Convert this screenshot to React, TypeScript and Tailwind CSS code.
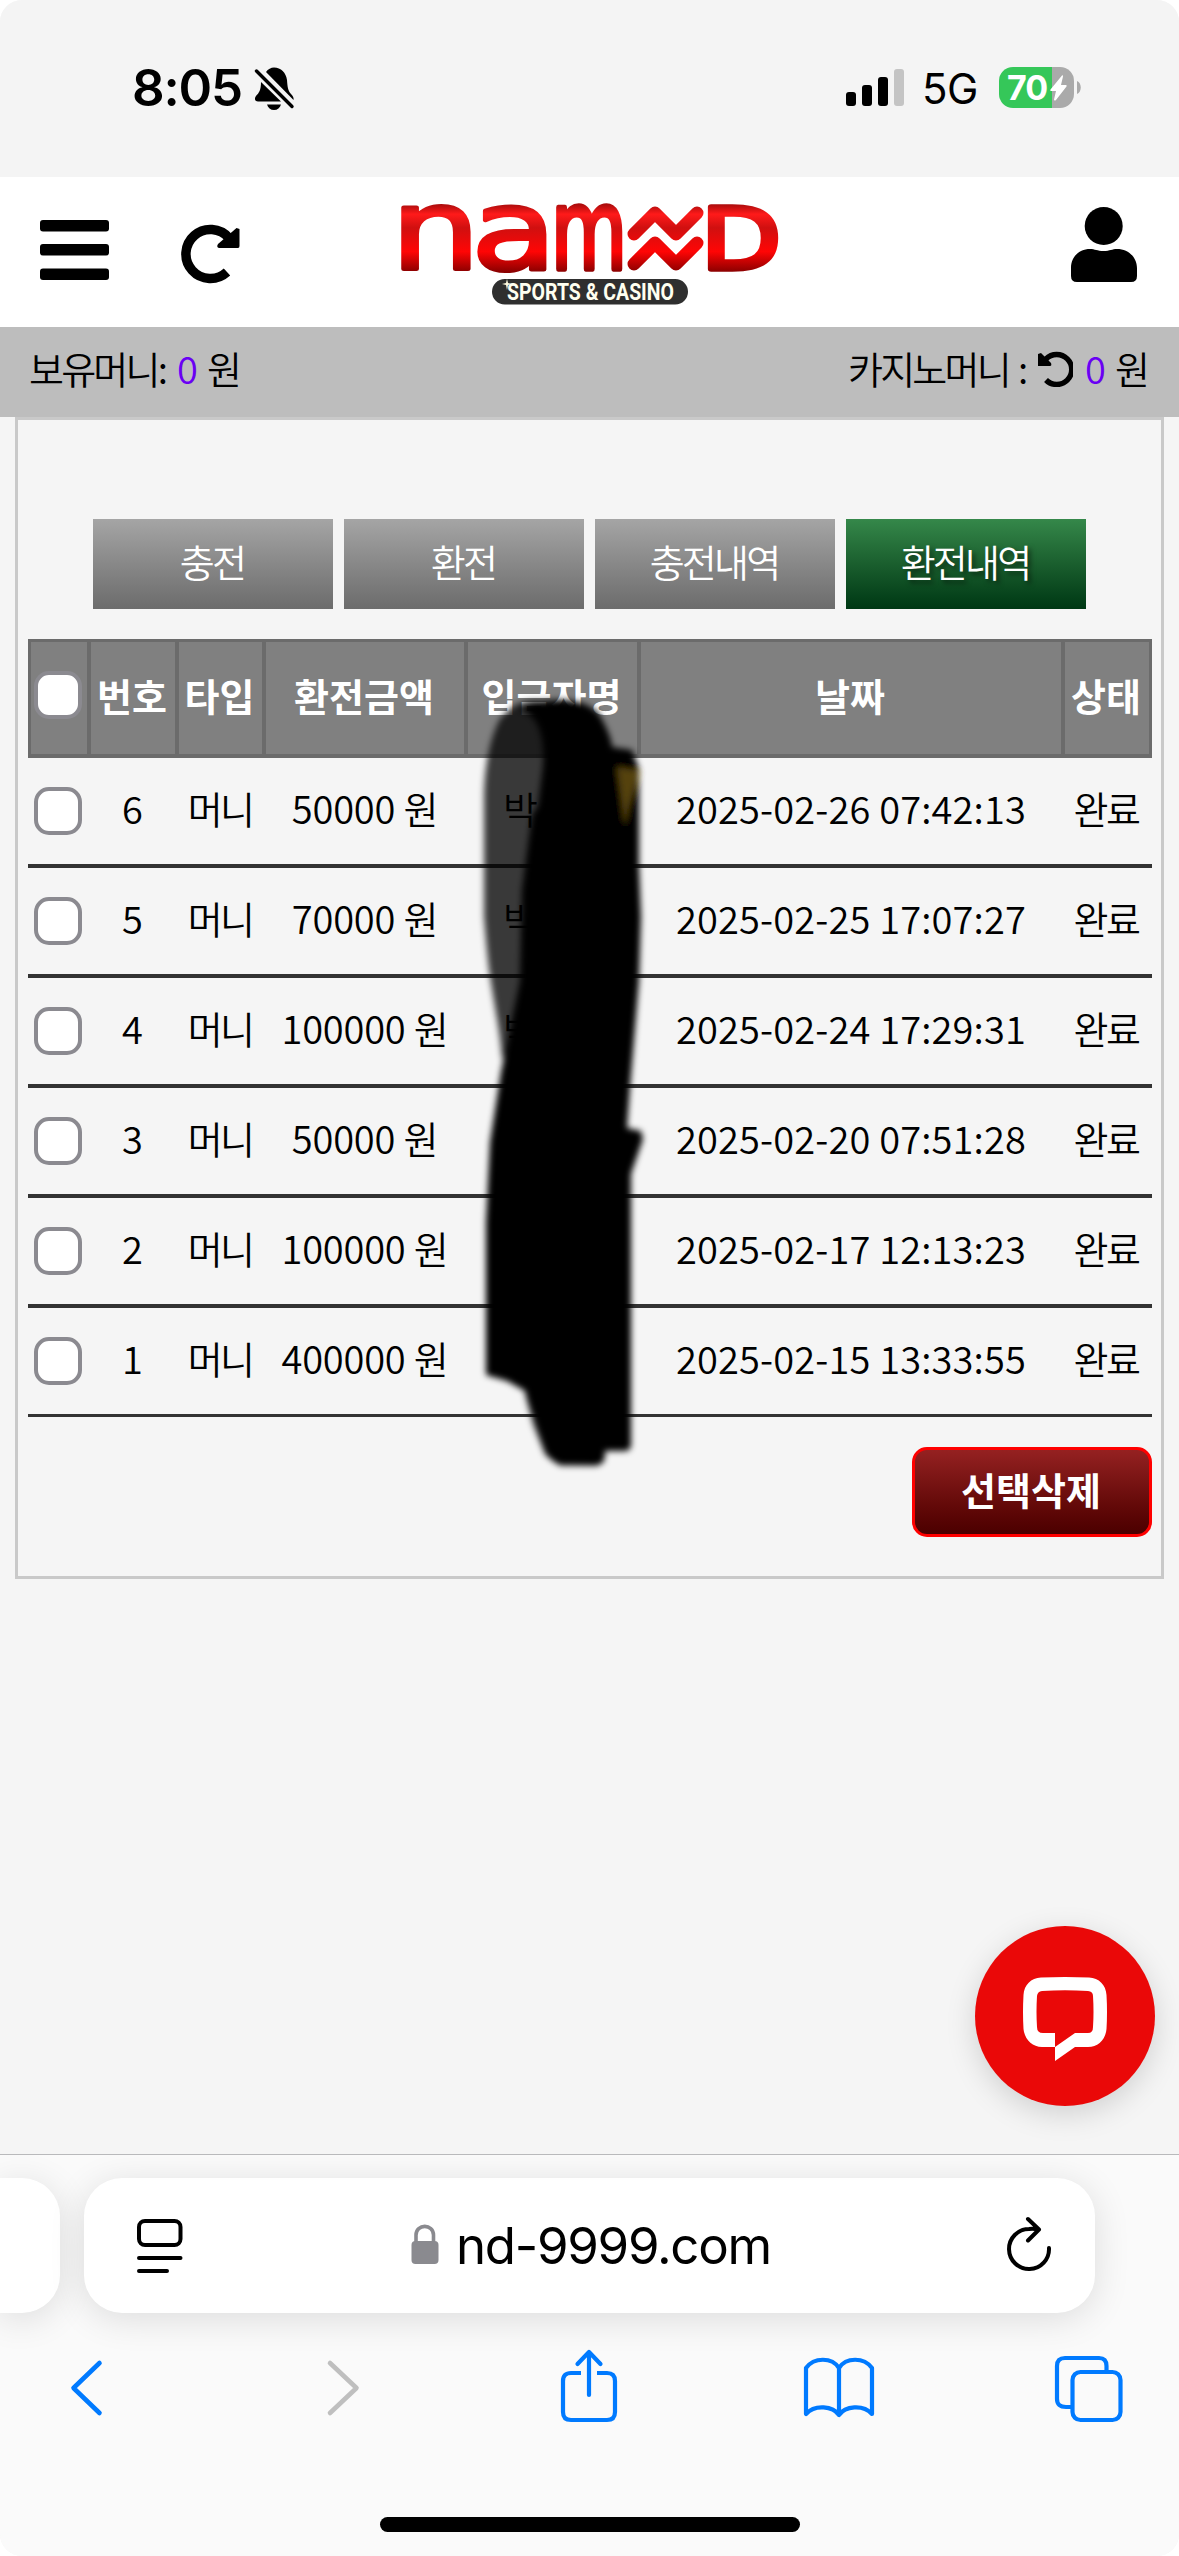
import React from 'react';
import clsx from 'clsx';

const TABS = [
    { label: '충전', active: false },
    { label: '환전', active: false },
    { label: '충전내역', active: false },
    { label: '환전내역', active: true },
];

const HEADINGS = ['번호', '타입', '환전금액', '입금자명', '날짜', '상태'];

const ROWS = [
    { no: 6, amount: '50000 원', name: '박', date: '2025-02-26 07:42:13' },
    { no: 5, amount: '70000 원', name: '박', date: '2025-02-25 17:07:27' },
    { no: 4, amount: '100000 원', name: '박', date: '2025-02-24 17:29:31' },
    { no: 3, amount: '50000 원', name: '', date: '2025-02-20 07:51:28' },
    { no: 2, amount: '100000 원', name: '', date: '2025-02-17 12:13:23' },
    { no: 1, amount: '400000 원', name: '', date: '2025-02-15 13:33:55' },
];

const StatusBar = () => (
    <div className="flex h-[177px] items-start justify-between bg-[#f4f4f4] pl-[132px] pr-[98px] font-['Inter',sans-serif]">
        <div className="flex items-start pt-[57px]">
            <span className="w-[122px] whitespace-nowrap text-[51px] font-semibold leading-[62px] tracking-[-1.2px]">8:05</span>
            <svg width="42" height="44" viewBox="0 0 42 44" className="mt-[10px]">
                <path d="M12 5C14 2 17 0.500 20 0.500C27 0.500 32 5.500 33 13C33.500 20 34 24 37 27C39 29 40 31 39.500 33Z" />
                <path d="M7 15L27 34.500H4C1 34.500 0 31.500 2 29C5 26 7 23 7 15Z" />
                <path d="M13 37.500H27C26 41 23.500 43 20 43C16.500 43 14 41 13 37.500Z" />
                <path d="M2.500 4L38 39.500" stroke="#000" strokeWidth="3.400" strokeLinecap="round" />
            </svg>
        </div>
        <div className="flex items-start">
            <svg width="58" height="38" viewBox="0 0 58 38" className="mt-[69px]">
                <rect x="0" y="23" width="10" height="14" rx="3" />
                <rect x="16" y="16" width="10" height="21" rx="3" />
                <rect x="32" y="8" width="10" height="29" rx="3" />
                <rect x="48" y="0" width="10" height="37" rx="3" fill="#c4c4c4" />
            </svg>
            <span className="ml-[18px] mt-[64px] w-[77px] whitespace-nowrap text-[42px] leading-[50px] tracking-[-0.5px]">5G</span>
            <div className="mt-[67px] flex h-[41px] w-[75px] items-center rounded-[14px] bg-[linear-gradient(to_right,#35c759_53px,#aaaaaa_53px)] pl-[8px]">
                <span className="w-[43px] text-[34px] font-bold leading-[41px] tracking-[-1px] text-white">70</span>
                <svg width="17" height="26" viewBox="0 0 17 26">
                    <path d="M12 0.500L0.500 14.500C0 15.500 0.500 16 1.500 16H6L4 24.500C4 25.500 5 26 6 25L16.500 11.500C17 10.500 16.500 10 15.500 10H11L13 1.500C13 0.500 12.500 0 12 0.500Z" fill="#fff" />
                </svg>
            </div>
            <svg width="4" height="13" viewBox="0 0 4 13" className="ml-[3px] mt-[81px]">
                <path d="M0 0C5 2 5 11 0 13Z" fill="#aaa" />
            </svg>
        </div>
    </div>
);

const Logo = () => (
    <svg width="380" height="106" viewBox="0 0 380 106" className="overflow-visible font-['DejaVu_Sans',sans-serif]">
        <defs>
            <linearGradient id="red" x1="0" y1="3" x2="0" y2="71" gradientUnits="userSpaceOnUse">
                <stop offset="0" stopColor="#a80c0c" />
                <stop offset="0.150" stopColor="#ff1a1a" />
                <stop offset="0.350" stopColor="#d01010" />
                <stop offset="0.700" stopColor="#ff0505" />
                <stop offset="1" stopColor="#8a0000" />
            </linearGradient>
        </defs>
        <g fill="url(#red)" stroke="url(#red)" strokeWidth="4" strokeLinejoin="round">
            <text x="-7.900" y="67.500" fontSize="112" textLength="89" lengthAdjust="spacingAndGlyphs">n</text>
            <text x="72.500" y="67.500" fontSize="112" textLength="85" lengthAdjust="spacingAndGlyphs">a</text>
            <text x="152" y="67.500" fontSize="112" strokeWidth="5.500" textLength="76" lengthAdjust="spacingAndGlyphs">m</text>
            <text x="302" y="67.500" fontSize="86" strokeWidth="5.500" textLength="80" lengthAdjust="spacingAndGlyphs">D</text>
        </g>
        <g fill="none" stroke="url(#red)" strokeWidth="13" strokeLinecap="round" strokeLinejoin="round">
            <path d="M235 33L256 12L277 33L298 12" />
            <path d="M235 63L256 42L277 63L298 42" />
        </g>
        <rect x="93" y="78" width="196" height="25.500" rx="12.750" fill="#2f2f2f" />
        <text x="108" y="98.500" fontSize="23" fontWeight="700" fill="#fffff0" textLength="167" lengthAdjust="spacingAndGlyphs" className="font-['Roboto',sans-serif]">SPORTS &amp; CASINO</text>
        <path d="M108 78L109 82L113 83L109 84L108 89L107 84L103 83L107 82Z" fill="#fffbe0" />
    </svg>
);

const SiteHeader = () => (
    <header className="flex h-[150px] items-start bg-white">
        <svg width="69" height="60" viewBox="0 0 69 60" className="ml-[40px] mt-[43px]">
            <rect width="69" height="11.500" rx="3" />
            <rect y="24" width="69" height="11.500" rx="3" />
            <rect y="48.500" width="69" height="11.500" rx="3" />
        </svg>
        <svg width="60" height="60" viewBox="0 0 60 60" className="ml-[72px] mt-[47px]">
            <path d="M46 48A24.500 24.500 0 1 1 48 14" fill="none" stroke="#000" strokeWidth="9.500" />
            <path d="M55.500 4L58.500 5V22Q58.500 24 57 24H38Q35 23 37 20Z" strokeLinejoin="round" />
        </svg>
        <div className="ml-[158px] mt-[24px]">
            <Logo />
        </div>
        <svg width="66" height="76" viewBox="0 0 66 76" className="ml-[292px] mt-[30px]">
            <circle cx="32.700" cy="19" r="19" />
            <path d="M0 61C0 49 9 42 19 42C24 42 26 44 32.700 44C39 44 41 42 46 42C57 42 66 50 66 61V69Q66 75 60 75H6Q0 75 0 69Z" />
        </svg>
    </header>
);

const BalanceBar = () => (
    <div className="flex h-[90px] items-center justify-between bg-[#bdbdbd] pl-[29px] pr-[29px] text-[38px] font-[350] leading-[54px]">
        <div className="flex pb-[8px]">
            <span className="w-[148px] tracking-[-2.8px]">보유머니:</span>
            <span className="w-[30px] text-[#6a00f4]">0</span>
            <span>원</span>
        </div>
        <div className="flex pb-[8px]">
            <span className="w-[170px] tracking-[-2.8px]">카지노머니</span>
            <span className="w-[20px]">:</span>
            <svg width="35" height="36" viewBox="0 0 35 36" className="mr-[12px] mt-[10px]">
                <path d="M8 8A15 15 0 1 1 8 29" fill="none" stroke="#000" strokeWidth="5.400" />
                <path d="M0 3L3 2L13 12Q14 15 12 15H0Z" />
            </svg>
            <span className="w-[30px] text-[#6a00f4]">0</span>
            <span>원</span>
        </div>
    </div>
);

const Checkbox = () => (
    <span className="block h-12 w-12 rounded-[15px] border-4 border-[#8b8a90] bg-white" />
);

// Marker strokes that hide the depositor names
const Scribble = () => (
    <svg width="220" height="820" viewBox="460 680 220 820" className="absolute left-[442px] top-[260px]">
        <defs>
            <filter id="soft">
                <feGaussianBlur stdDeviation="3" />
            </filter>
        </defs>
        <g filter="url(#soft)">
            <path d="M545 702C525 697 510 706 500 719C491 735 484 765 484 799V917C486 940 488 965 490 976C495 1010 500 1030 502 1060L530 1000L550 800Z" fillOpacity="0.770" />
            <path d="M520 710C535 698 580 694 598 713C606 725 612 740 612 747L632 750L639 769L639 864L641 917L639 981L630 1088L627 1128L641 1131L643 1139L631 1174V1442Q632 1451 625 1451H605Q606 1465 597 1465L560 1464Q550 1462 545 1450L525 1391L507 1381L486 1375L486 1222L490 1142L501 1072L520 981L522 890L532 815L538 806L543 767C545 740 540 715 520 710Z" />
            <path d="M524 1391L533 1425L545 1455L560 1466H598L600 1440H550Z" fillOpacity="0.700" />
            <path d="M617 767L640 771L629 806L625 826Z" fill="#54420f" />
        </g>
    </svg>
);

const HistoryPanel = () => (
    <section className="relative mx-[15px] h-[1162px] border-[3px] border-[#c9c9c9] px-[10px] pt-[99px]">
        <nav className="ml-[65px] flex gap-[11px]">
            {TABS.map((tab) => (
                <button
                    key={tab.label}
                    className={clsx(
                        'h-[90px] w-[240px] pb-[8px] pr-[2px] text-[38px] font-[350] tracking-[-2.8px] text-white',
                        tab.active
                            ? 'bg-linear-to-b from-[#35884a] to-[#003814] [text-shadow:3px_3px_5px_#0008]'
                            : 'bg-linear-to-b from-[#a5a5a5] to-[#6c6c6c]'
                    )}
                >
                    {tab.label}
                </button>
            ))}
        </nav>

        <div className="mt-[30px] w-[1124px]">
            <div className="grid h-[119px] grid-cols-[60px_88px_87px_202px_173px_424px_88px] border-x border-t-[3px] border-b-4 border-[#6b6b6b] bg-[#808080] text-[38px] font-bold text-white">
                <div className="flex items-center justify-center border-x-2 border-[#6b6b6b] pb-[6px] pr-[2px]">
                    <Checkbox />
                </div>
                {HEADINGS.map((heading) => (
                    <div key={heading} className="flex items-center justify-center whitespace-nowrap border-x-2 border-[#6b6b6b] pb-[7px] pr-[2px]">
                        {heading}
                    </div>
                ))}
            </div>
            {ROWS.map((row) => (
                <div
                    key={row.no}
                    className="grid h-[110px] grid-cols-[61px_88px_87px_202px_173px_424px_89px] items-center border-b-4 border-[#333] text-center text-[38px] font-[350] last:h-[109px] last:border-b-[3px]"
                >
                    <div className="flex justify-center pr-[2px]">
                        <Checkbox />
                    </div>
                    <span className="pb-[7px] pr-[1px]">{row.no}</span>
                    <span className="pb-[7px] pr-[1px] tracking-[-2.8px]">머니</span>
                    <span className="whitespace-nowrap pb-[7px] tracking-[-0.2px]">{row.amount}</span>
                    <span className="pb-[7px] pl-[37px] text-left">{row.name}</span>
                    <span className="whitespace-nowrap pb-[7px] tracking-[0.15px]">{row.date}</span>
                    <span className="pb-[7px] pr-[3px] tracking-[-2.4px]">완료</span>
                </div>
            ))}
        </div>

        <button className="ml-auto mr-[-1px] mt-[30px] block h-[90px] w-[240px] rounded-[15px] border-[3px] border-[#ff0000] bg-linear-to-b from-[#952121] to-[#4b0000] pb-[7px] pr-[2px] text-[38px] font-bold text-white">
            선택삭제
        </button>
        <Scribble />
    </section>
);

const ChatButton = () => (
    <button className="ml-auto mr-[24px] mt-[347px] flex h-[180px] w-[180px] justify-center rounded-full bg-[#ea0808] pt-[51px] shadow-[0_8px_30px_rgba(0,0,0,0.15)]">
        <svg width="84" height="84" viewBox="0 0 84 84">
            <path
                fill="#fff"
                fillRule="evenodd"
                d="M18 0.500Q42 -0.500 66 0.500C76 1 83 8 83.500 18Q84.500 35 83.500 52C82.500 63 75 70 65 70H52L32 84V70H19C9 70 1.500 62 0.500 52Q-0.500 35 0.500 18C1 8 8 1 18 0.500ZM19 14Q42 12.500 65 14Q70 14.500 70 19Q71 35 70 50Q70 56 65 56H52L32 70V56H20Q14 56 14 50Q13 35 14 19Q14.500 14.500 19 14Z"
            />
        </svg>
    </button>
);

const BrowserBar = () => (
    <footer className="mt-[48px] h-[402px] overflow-hidden border-t border-[#b9b9bb] bg-[#fafafa]">
        <div className="flex pt-[23px]">
            <div className="h-[135px] w-[60px] rounded-r-[38px] bg-white shadow-[0_6px_36px_rgba(0,0,0,0.12)]" />
            <div className="ml-[24px] flex h-[135px] w-[1011px] items-start rounded-[38px] bg-white shadow-[0_6px_36px_rgba(0,0,0,0.12)]">
                <svg width="46" height="56" viewBox="0 0 46 56" fill="none" stroke="#000" strokeWidth="4" strokeLinecap="round" className="ml-[53px] mt-[40px]">
                    <rect x="2" y="3" width="41.500" height="24" rx="6" />
                    <path d="M2 40H43.500M2 53H30" />
                </svg>
                <svg width="28" height="42" viewBox="0 0 28 42" className="ml-[228px] mt-[46px]">
                    <path d="M5 20V11C5 -0.500 22.500 -0.500 22.500 11V20" fill="none" stroke="#8a8a8f" strokeWidth="3.600" />
                    <rect x="0.500" y="17" width="27" height="23" rx="4" fill="#8a8a8f" />
                </svg>
                <span className="ml-[17px] mt-[37px] w-[320px] whitespace-nowrap font-['Inter',sans-serif] text-[51px] leading-[62px] tracking-[-1.3px]">nd-9999.com</span>
                <svg width="48" height="60" viewBox="0 0 48 60" fill="none" stroke="#000" strokeWidth="4" strokeLinecap="round" strokeLinejoin="round" className="ml-[228px] mt-[37px]">
                    <path d="M45 33A20 20 0 1 1 25 14Q30 13.500 34 14.500M24 4L35 14.500L24 25.500" />
                </svg>
            </div>
        </div>
        <div className="ml-[66px] mt-[34px] flex h-[84px] items-start">
            <svg width="40" height="84" viewBox="0 0 40 84" fill="none" stroke="#007aff" strokeWidth="4.600" strokeLinecap="round" strokeLinejoin="round">
                <path d="M33.500 16L7.500 41L33.500 66" />
            </svg>
            <svg width="40" height="84" viewBox="0 0 40 84" fill="none" stroke="#bfbfbf" strokeWidth="4.600" strokeLinecap="round" strokeLinejoin="round" className="ml-[218px]">
                <path d="M6 16L32.500 41L6 66" />
            </svg>
            <svg width="60" height="84" viewBox="0 0 60 84" fill="none" stroke="#007aff" strokeWidth="4.200" strokeLinecap="round" strokeLinejoin="round" className="ml-[195px]">
                <path d="M22 26H12Q4 26 4 34V65Q4 73 12 73H48Q56 73 56 65V34Q56 26 48 26H38" strokeLinecap="butt" />
                <path d="M30 48V6M18.500 17L30 5L41.500 17" />
            </svg>
            <svg width="74" height="84" viewBox="0 0 74 84" fill="none" stroke="#007aff" strokeWidth="4.200" strokeLinecap="round" strokeLinejoin="round" className="ml-[183px]">
                <path d="M37 21V68C31 59 13 57 4 67V21C12 10 30 10 37 21C44 10 62 10 70 21V67C61 57 43 59 37 68" />
            </svg>
            <svg width="70" height="84" viewBox="0 0 70 84" fill="none" stroke="#007aff" strokeWidth="4.200" className="ml-[177px]">
                <path d="M19 60H13Q4 60 4 52V19Q4 11 12 11H46Q53.500 11 53.500 19V25" />
                <rect x="19.500" y="25" width="48" height="48" rx="8" />
            </svg>
        </div>
        <div className="mx-auto mt-[86px] h-[15px] w-[420px] rounded-full bg-black" />
    </footer>
);

export default function App() {
    return (
        <div className="h-[2556px] w-[1179px] bg-white">
            <main className="flex h-[2556px] flex-col overflow-hidden rounded-[22px] bg-[#f5f5f5] font-['Noto_Sans_CJK_KR',sans-serif] text-black">
                <StatusBar />
                <SiteHeader />
                <BalanceBar />
                <HistoryPanel />
                <ChatButton />
                <BrowserBar />
            </main>
        </div>
    );
}
